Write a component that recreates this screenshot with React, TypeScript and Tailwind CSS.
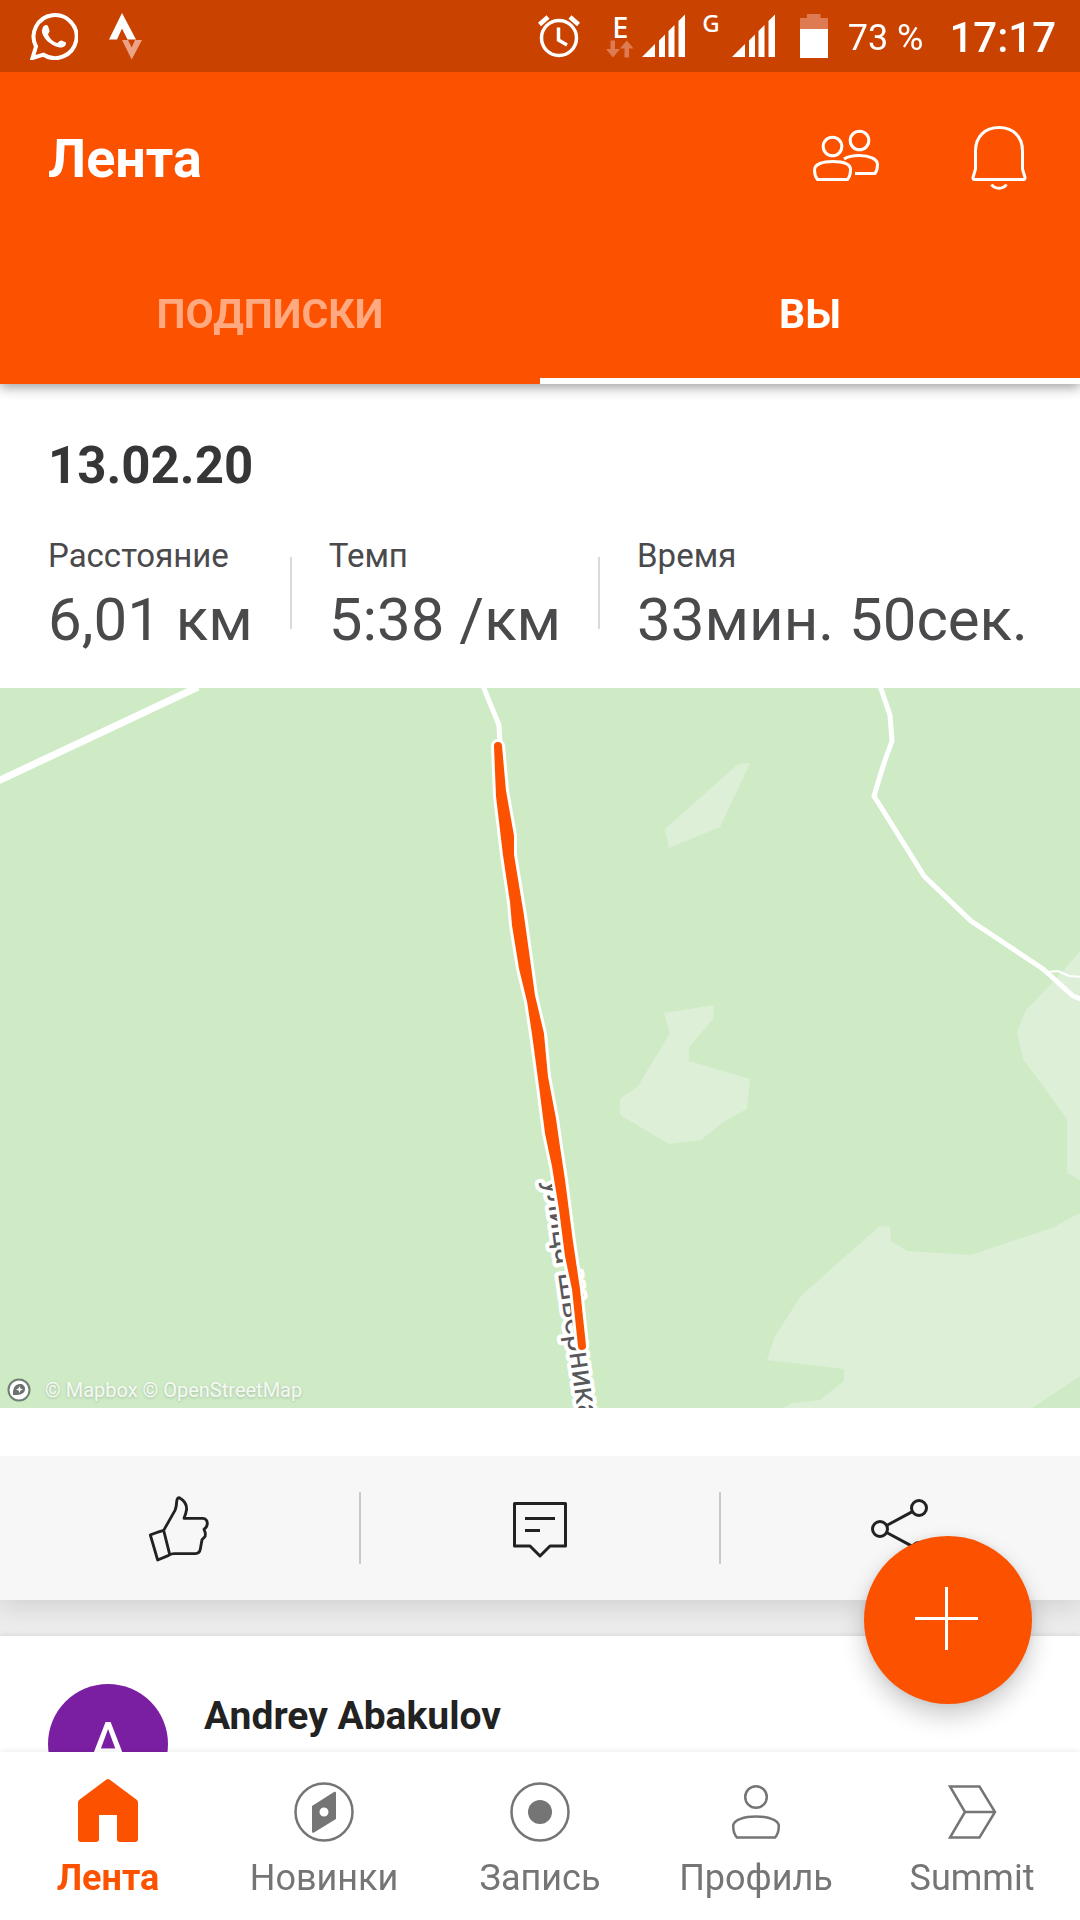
import type { ReactNode } from "react";

function WhatsappIcon() {
  return (
    <svg width="48" height="48" viewBox="0 0 48 48" fill="none" aria-hidden="true">
      <path
        d="M2.500 46 L6 34.500 A21.500 21.500 0 1 1 13.500 42.700 Z"
        stroke="#fff"
        strokeWidth="4"
        strokeLinejoin="miter"
      />
      <path
        d="M13 15 C15 12.500 17 12.500 18 14 L19.500 18.500 C20 20 18 21.500 18 22.500 C20 27 23 29.500 27 31 C28.500 31 29.500 28 31.500 28.500 L36 30.500 C36.500 34 33 36 29.500 35.500 C20 33.500 12 25.500 11.800 18.500 Z"
        fill="#fff"
      />
    </svg>
  );
}

function StravaIcon() {
  return (
    <svg width="34" height="48" viewBox="0 0 34 48" aria-hidden="true">
      <path d="M13 1 L27 27.500 H18.500 L13 16.500 L8 27.500 H0 Z" fill="#fff" />
      <path d="M13 28 H19 L22.700 35.500 L26 28 H33 L22.700 47.500 Z" fill="#eba285" />
    </svg>
  );
}

function AlarmIcon() {
  return (
    <svg width="42" height="44" viewBox="0 0 42 44" fill="none" stroke="#fff" aria-hidden="true">
      <circle cx="21" cy="24" r="17.500" strokeWidth="3.500" />
      <path d="M20.500 13.500 V26 L29 31" strokeWidth="3.500" />
      <path d="M1.500 10.500 L10 3 M32 3 L40.500 10.500" strokeWidth="4.500" />
    </svg>
  );
}

function SignalIcon() {
  return (
    <svg width="44" height="44" viewBox="0 0 44 44" fill="#fff" aria-hidden="true">
      <path d="M0 43 L13 30 V43 Z" />
      <path d="M17 26.500 L23 20.500 V43 H17 Z" />
      <path d="M26.500 17 L32.500 11 V43 H26.500 Z" />
      <path d="M36.500 7 L43 0.500 V43 H36.500 Z" />
    </svg>
  );
}

function DataArrows() {
  return (
    <svg width="28" height="18" viewBox="0 0 28 18" fill="#de7b52" aria-hidden="true">
      <path d="M4.500 0.500 H9 V9 H14 L7 17.500 L0 9 H4.500 Z" />
      <path d="M18.500 17.500 H23 V8.500 H27.500 L20.800 0.500 L14 8.500 H18.500 Z" />
    </svg>
  );
}

function BatteryIcon() {
  return (
    <svg width="28" height="44" viewBox="0 0 28 44" aria-hidden="true">
      <path d="M7 0 H20.500 V4 H28 V15 H0 V4 H7 Z" fill="#de7b52" />
      <path d="M0 15 H28 V44 H0 Z" fill="#fff" />
    </svg>
  );
}

function FriendsIcon() {
  return (
    <svg width="72" height="72" viewBox="0 0 72 72" fill="none" stroke="#fff" strokeWidth="3" strokeLinejoin="round" aria-hidden="true">
      <circle cx="22.500" cy="26.500" r="9.300" />
      <circle cx="49.500" cy="20.500" r="9.300" />
      <path d="M7.500 59.500 H37.500 C39.500 57 40.500 53 40.500 49.500 C40.500 43.500 32 41.500 22.500 41.500 C13 41.500 4.500 44 4.500 50 C4.500 53.500 5.500 57 7.500 59.500 Z" />
      <path d="M34 39 C38 36.500 43 35.500 49.500 35.500 C59 35.500 67.500 39 67.500 44.500 C67.500 48 67 51 65 53.500 H45" />
    </svg>
  );
}

function BellIcon() {
  return (
    <svg width="72" height="72" viewBox="0 0 72 72" fill="none" stroke="#fff" strokeWidth="3" strokeLinejoin="round" aria-hidden="true">
      <path d="M12.500 31 C12.500 16.500 22 7.500 36 7.500 C50 7.500 59.500 16.500 59.500 31 V49 L62 57.500 C62 59 61.500 59.500 60.500 59.500 H11.500 C10.500 59.500 10 59 10 57.500 L12.500 49 Z" />
      <path d="M28.500 64.500 C32 69.500 40 69.500 43.500 64.500" />
    </svg>
  );
}

function ThumbIcon() {
  return (
    <svg width="68" height="76" viewBox="435 452 204 228" fill="none" stroke="#222" strokeWidth="8.500" strokeLinejoin="round" aria-hidden="true">
      <path d="M491 570 L525 510 Q529 502 530 484 Q531 472 538 472 Q560 484 560 506 Q558 520 552 534 H608 Q622 535 622 550 Q621 562 612 567 Q620 584 613 591 L606 598 L601 626 Q599 639 586 640 H522 Q515 640 506 645 L473 659 L451 584 Q458 580 491 570 L509 642" />
    </svg>
  );
}

function CommentIcon() {
  return (
    <svg width="60" height="60" viewBox="0 0 60 60" fill="none" stroke="#222" strokeWidth="3" strokeLinejoin="round" aria-hidden="true">
      <path d="M4.500 4.500 H55.500 V47 H40 L30 57 L20 47 H4.500 Z" />
      <path d="M15 19.500 H45 M15 31.500 H30" />
    </svg>
  );
}

function ShareIcon() {
  return (
    <svg width="60" height="60" viewBox="0 0 60 60" fill="none" stroke="#222" strokeWidth="3" aria-hidden="true">
      <circle cx="9" cy="30" r="7.500" />
      <circle cx="48" cy="9" r="7.500" />
      <circle cx="48" cy="51" r="7.500" />
      <path d="M15.600 26.500 L41.400 12.600 M15.600 33.500 L41.400 47.400" />
    </svg>
  );
}

function HomeIcon() {
  return (
    <svg width="72" height="72" viewBox="0 0 72 72" fill="#fc5200" aria-hidden="true">
      <path d="M34.500 3.500 Q36 2.500 37.500 3.500 L65 24 Q66 25 66 27 V63 Q66 66 63 66 H48 Q45 66 45 63 V39 H27 V63 Q27 66 24 66 H9 Q6 66 6 63 V27 Q6 25 7 24 Z" />
    </svg>
  );
}

function CompassIcon() {
  return (
    <svg width="72" height="72" viewBox="0 0 72 72" fill="none" aria-hidden="true">
      <circle cx="36" cy="36" r="28.500" stroke="#757575" strokeWidth="2.500" />
      <path
        fillRule="evenodd"
        d="M24 30 L46 16 Q48 15 48 17 V43 L26 56.500 Q24 57.500 24 55.500 Z M36 31.500 A4.500 4.500 0 1 0 36 40.500 A4.500 4.500 0 1 0 36 31.500 Z"
        fill="#757575"
      />
    </svg>
  );
}

function RecordIcon() {
  return (
    <svg width="72" height="72" viewBox="0 0 72 72" fill="none" aria-hidden="true">
      <circle cx="36" cy="36" r="28.500" stroke="#757575" strokeWidth="2.500" />
      <circle cx="36" cy="36" r="12" fill="#757575" />
    </svg>
  );
}

function ProfileIcon() {
  return (
    <svg width="72" height="72" viewBox="0 0 72 72" fill="none" stroke="#757575" strokeWidth="2.500" strokeLinejoin="round" aria-hidden="true">
      <circle cx="36" cy="21" r="10.800" />
      <path d="M17 61.500 H55 C57.500 59 58.800 54 58.800 50 C58.800 43.500 47 40.500 36 40.500 C25 40.500 13.200 43.500 13.200 50 C13.200 54 14.500 59 17 61.500 Z" />
    </svg>
  );
}

function SummitIcon() {
  return (
    <svg width="72" height="72" viewBox="0 0 72 72" fill="none" stroke="#757575" strokeWidth="2.500" aria-hidden="true">
      <path d="M14 10.500 H43.500 L59 36 L43.500 61.500 H14 L29 36 Z" />
      <path d="M29 36 H59" />
    </svg>
  );
}

const TRACK =
  "M498 58 L500 108 L507 167 L514 214 L516 237 L523 280 L531 313 L536 346 L543 398 L549 445 L556 478 L563 521 L569 568 L576 601 L582 658 L576 601 L569 554 L561 492 L556 459 L552 431 L544 389 L540 346 L531 308 L526 271 L520 228 L510 167 L510 148 L502 103 Z";

function RouteMap() {
  return (
    <div className="relative">
      <svg className="block h-auto w-full" viewBox="0 0 1080 720" role="img" aria-label="Карта маршрута">
        <rect width="1080" height="720" fill="#ceebc6" />
        <g fill="#deefd8">
          <path d="M738 76 L750 75 L720 139 L669 160 L665 141 Z" />
          <path d="M664 325 L714 317 L713 331 L689 359 V373 L750 391 L747 421 L726 432 L701 452 L669 456 L620 427 V411 L638 398 L670 345 Z" />
          <path d="M1080 263 L1067 278 L1050 297 L1026 322 L1017 344 L1023 371 L1067 431 V485 L1080 492 Z" />
          <path d="M1080 525 L1052 540 L971 567 L907 563 L891 553 L890 539 L880 538 L848 566 L801 608 L775 648 L767 672 L844 681 V693 L820 712 L793 715 L783 720 H1032 L1080 688 Z" />
        </g>
        <g fill="none" stroke="#fff" strokeLinejoin="round">
          <path d="M-4 94 L198 -1" strokeWidth="7" />
          <path d="M483 -2 L499 37 L500 58" strokeWidth="5" />
          <path d="M880 -2 L890 27 L892 53 L884 75 L874 108 L924 188 L971 233 L1043 281 L1073 308 L1084 312" strokeWidth="5" />
          <path d="M1048 284 L1058 283 L1069 288 L1084 289" strokeWidth="2" />
        </g>
        <text
          transform="translate(545 493) rotate(82)"
          className="font-[Roboto,sans-serif] text-[31px]"
          fill="#58585c"
          stroke="#fff"
          strokeWidth="8"
          strokeLinejoin="round"
          paintOrder="stroke"
        >
          улица Шверника
        </text>
        <path d={TRACK} fill="#fff" stroke="#fff" strokeWidth="14" strokeLinejoin="round" />
        <path d={TRACK} fill="#fc5200" stroke="#fc5200" strokeWidth="8" strokeLinejoin="round" />
      </svg>
      <div className="absolute bottom-1 left-[7px] flex items-center gap-3.5">
        <svg width="24" height="24" viewBox="0 0 24 24" aria-hidden="true">
          <circle cx="12" cy="12" r="10.500" fill="#fff" stroke="#6f7f74" strokeWidth="2" />
          <path d="M6 17 C5.500 11 7.500 6 13 6 C16 6 18 8 18 11 C18 15.500 13 17.500 6 17 Z" fill="#6b7070" />
          <path d="M12.500 8 L13.500 10.500 L16 11.500 L13.500 12.500 L12.500 15 L11.500 12.500 L9 11.500 L11.500 10.500 Z" fill="#fff" />
        </svg>
        <span className="text-[20px] leading-7 text-white/85 [text-shadow:0_1px_3px_rgba(0,0,0,0.2)]">© Mapbox © OpenStreetMap</span>
      </div>
    </div>
  );
}

function Stat({ label, value }: { label: string; value: string }) {
  return (
    <div className="flex flex-col gap-2 whitespace-nowrap text-[#4a4a4d]">
      <dt className="text-[33px] leading-10">{label}</dt>
      <dd className="text-[60px] leading-[72px]">{value}</dd>
    </div>
  );
}

function StatDivider() {
  return <div className="mx-[37px] mt-[21px] h-18 w-0.5 bg-[#d9d9d9]" />;
}

function Action({ label, children }: { label: string; children: ReactNode }) {
  return (
    <button type="button" aria-label={label} className="flex h-36 flex-1 items-center justify-center pt-px">
      {children}
    </button>
  );
}

function NavItem({ label, active, children }: { label: string; active?: boolean; children: ReactNode }) {
  return (
    <a
      href="#"
      aria-current={active ? "page" : undefined}
      className={
        active
          ? "flex flex-1 flex-col items-center gap-1.5 text-[36px] leading-[48px] font-bold text-[#fc5200]"
          : "flex flex-1 flex-col items-center gap-1.5 text-[36px] leading-[48px] text-[#757575]"
      }
    >
      {children}
      <span>{label}</span>
    </a>
  );
}

export default function App() {
  return (
    <div className="flex h-screen flex-col bg-white font-[Roboto,sans-serif]">
      <header className="relative z-10 bg-[#fc5200] text-white shadow-[0_3px_12px_rgba(0,0,0,0.4)]">
        <div className="flex h-18 items-center justify-between bg-[#ca4200] pr-6 pl-[30px]">
          <div className="flex items-center gap-[31px]">
            <WhatsappIcon />
            <StravaIcon />
          </div>
          <div className="flex items-center">
            <AlarmIcon />
            <div className="ml-[26px] flex flex-col items-center">
              <span className="font-['Noto_Sans',sans-serif] text-[29px] leading-[26px] font-medium">E</span>
              <DataArrows />
            </div>
            <div className="ml-2">
              <SignalIcon />
            </div>
            <span className="ml-4 self-start pt-px font-['Noto_Sans',sans-serif] text-[24px] leading-6 font-medium">G</span>
            <div className="ml-3">
              <SignalIcon />
            </div>
            <div className="ml-6">
              <BatteryIcon />
            </div>
            <span className="ml-5 pt-1 text-[36px] leading-10">73 %</span>
            <span className="ml-[26px] pt-1 text-[42px] leading-12 font-medium">17:17</span>
          </div>
        </div>

        <div className="flex h-42 items-center justify-between pr-[45px] pl-12">
          <h1 className="pt-1.5 text-[54px] leading-16 font-bold">Лента</h1>
          <div className="flex items-center gap-[81px]">
            <button type="button" aria-label="Друзья">
              <FriendsIcon />
            </button>
            <button type="button" aria-label="Уведомления">
              <BellIcon />
            </button>
          </div>
        </div>

        <div role="tablist" className="flex h-36 text-[41px] leading-12 font-bold">
          <button type="button" role="tab" aria-selected="false" className="flex-1 border-b-6 border-transparent pt-2.5 text-white/50">
            ПОДПИСКИ
          </button>
          <button type="button" role="tab" aria-selected="true" className="flex-1 border-b-6 border-white pt-2.5">
            ВЫ
          </button>
        </div>
      </header>

      <main className="min-h-0 flex-1 overflow-y-auto bg-[#ececec] [scrollbar-width:none]">
        <article className="bg-white shadow-[0_6px_24px_rgba(0,0,0,0.12)]">
          <div className="px-12 pt-13 pb-8">
            <h2 className="text-[51px] leading-15 font-bold text-[#363638]">13.02.20</h2>
            <dl className="mt-10 flex">
              <Stat label="Расстояние" value="6,01 км" />
              <StatDivider />
              <Stat label="Темп" value="5:38 /км" />
              <StatDivider />
              <Stat label="Время" value="33мин. 50сек." />
            </dl>
          </div>
          <RouteMap />
          <div className="mt-12 flex items-center bg-[#f7f7f7]">
            <Action label="Нравится">
              <ThumbIcon />
            </Action>
            <div className="h-18 w-0.5 bg-[#c9c9c9]" />
            <Action label="Комментировать">
              <CommentIcon />
            </Action>
            <div className="h-18 w-0.5 bg-[#c9c9c9]" />
            <Action label="Поделиться">
              <ShareIcon />
            </Action>
          </div>
        </article>

        <article className="mt-9 flex gap-9 bg-white px-12 py-12 shadow-[0_0_6px_rgba(0,0,0,0.12)]">
          <div className="flex size-30 items-center justify-center rounded-full bg-[#7b1fa2] text-[60px] leading-none text-white">A</div>
          <h3 className="pt-2 text-[39px] leading-12 font-bold text-[#222]">Andrey Abakulov</h3>
        </article>
      </main>

      <div className="relative z-10">
        <button
          type="button"
          aria-label="Добавить"
          className="absolute right-12 bottom-full mb-12 flex size-42 items-center justify-center rounded-full bg-[#fc5200] shadow-[0_12px_24px_rgba(0,0,0,0.2),0_0_9px_rgba(0,0,0,0.08)]"
        >
          <svg width="66" height="66" viewBox="0 0 66 66" fill="none" stroke="#fff" strokeWidth="3" aria-hidden="true">
            <path d="M31.500 0 V63 M0 31.500 H63" />
          </svg>
        </button>
        <nav className="flex bg-white pt-6 pb-[18px] shadow-[0_-2px_4px_rgba(0,0,0,0.06)]">
          <NavItem label="Лента" active>
            <HomeIcon />
          </NavItem>
          <NavItem label="Новинки">
            <CompassIcon />
          </NavItem>
          <NavItem label="Запись">
            <RecordIcon />
          </NavItem>
          <NavItem label="Профиль">
            <ProfileIcon />
          </NavItem>
          <NavItem label="Summit">
            <SummitIcon />
          </NavItem>
        </nav>
      </div>
    </div>
  );
}
